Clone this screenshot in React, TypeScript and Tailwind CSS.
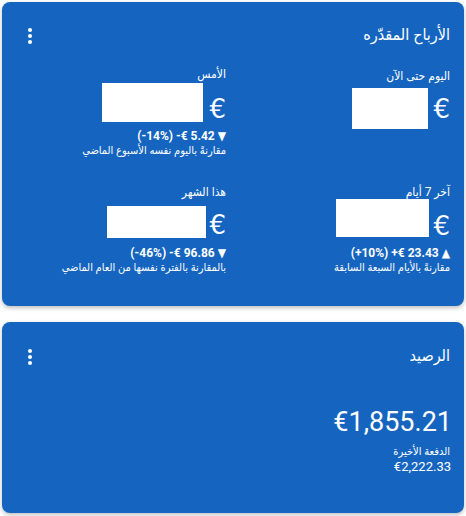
import React from "react";

const font = { fontFamily: "Roboto, 'DejaVu Sans Condensed', 'DejaVu Sans', sans-serif" };

function Kebab() {
  return (
    <svg width="24" height="24" viewBox="0 0 24 24" className="shrink-0">
      <circle cx="12" cy="6" r="2" fill="white" />
      <circle cx="12" cy="12" r="2" fill="white" />
      <circle cx="12" cy="18" r="2" fill="white" />
    </svg>
  );
}

function Euro({ className }: { className: string }) {
  return (
    <span className={"text-[26px] leading-none [font-family:'DejaVu_Sans',sans-serif] " + className}>€</span>
  );
}

export default function App() {
  return (
    <div dir="rtl" className="w-[466px] h-[516px] bg-white p-[2px] flex flex-col gap-4 text-white" style={font}>
      {/* Card 1 */}
      <div className="h-[304px] rounded-lg bg-[#1565c0] shadow-[0_2px_4px_rgba(0,0,0,0.25)] pr-[14px] pl-4 pt-[14px] flex flex-col">
        <div className="h-10 flex items-center justify-between">
          <div className="text-[16px] leading-6 -mt-[3px]">الأرباح المقدّره</div>
          <Kebab />
        </div>
        <div className="grid grid-cols-2 gap-x-4">
          {/* Row 1 right */}
          <div className="flex flex-col">
            <div className="mt-[12px] text-[12px] leading-4">اليوم حتى الآن</div>
            <div className="mt-1 flex items-start gap-[5px]">
              <Euro className="mt-[8px]" />
              <div className="w-[76px] h-[41px] bg-white" />
            </div>
          </div>
          {/* Row 1 left */}
          <div className="flex flex-col">
            <div className="mt-[10px] text-[12px] leading-4">الأمس</div>
            <div className="mt-[1px] flex items-start gap-[6px]">
              <Euro className="mt-[13px]" />
              <div className="w-[101px] h-[39px] bg-white" />
            </div>
            <div dir="ltr" className="mt-[6px] text-right text-[12px] font-bold leading-4">(-14%) -€ 5.42 ▼</div>
            <div className="text-[11px] leading-[14px]">مقارنةً باليوم نفسه الأسبوع الماضي</div>
          </div>
          {/* Row 2 right */}
          <div className="flex flex-col">
            <div className="mt-[26px] text-[12px] leading-4">آخر 7 أيام</div>
            <div className="-mt-[1px] flex items-start gap-[4px]">
              <Euro className="mt-[14px]" />
              <div className="w-[93px] h-[38px] bg-white" />
            </div>
            <div dir="ltr" className="mt-[6px] text-right text-[12px] font-bold leading-4">(+10%) +€ 23.43 ▲</div>
            <div className="text-[11px] leading-[14px]">مقارنةً بالأيام السبعة السابقة</div>
          </div>
          {/* Row 2 left */}
          <div className="flex flex-col">
            <div className="mt-[26px] text-[12px] leading-4">هذا الشهر</div>
            <div className="mt-[6px] flex items-start gap-[3px]">
              <Euro className="mt-[6px]" />
              <div className="w-[99px] h-[32px] bg-white" />
            </div>
            <div dir="ltr" className="mt-[7px] text-right text-[12px] font-bold leading-4">(-46%) -€ 96.86 ▼</div>
            <div className="text-[11px] leading-[14px]">بالمقارنة بالفترة نفسها من العام الماضي</div>
          </div>
        </div>
      </div>

      {/* Card 2 */}
      <div className="h-[191px] rounded-lg bg-[#1565c0] shadow-[0_2px_4px_rgba(0,0,0,0.25)] pr-[14px] pl-4 pt-[15px] flex flex-col">
        <div className="h-10 flex items-center justify-between">
          <div className="text-[16px] leading-6 -mt-[3px]">الرصيد</div>
          <Kebab />
        </div>
        <div dir="ltr" className="mt-[29px] -mr-[2px] text-right text-[27px] leading-8">€1,855.21</div>
        <div className="mt-[7px] text-[11px] leading-[14px]">الدفعة الأخيرة</div>
        <div dir="ltr" className="-mr-[1px] text-right text-[13px] leading-4">€2,222.33</div>
      </div>
    </div>
  );
}
